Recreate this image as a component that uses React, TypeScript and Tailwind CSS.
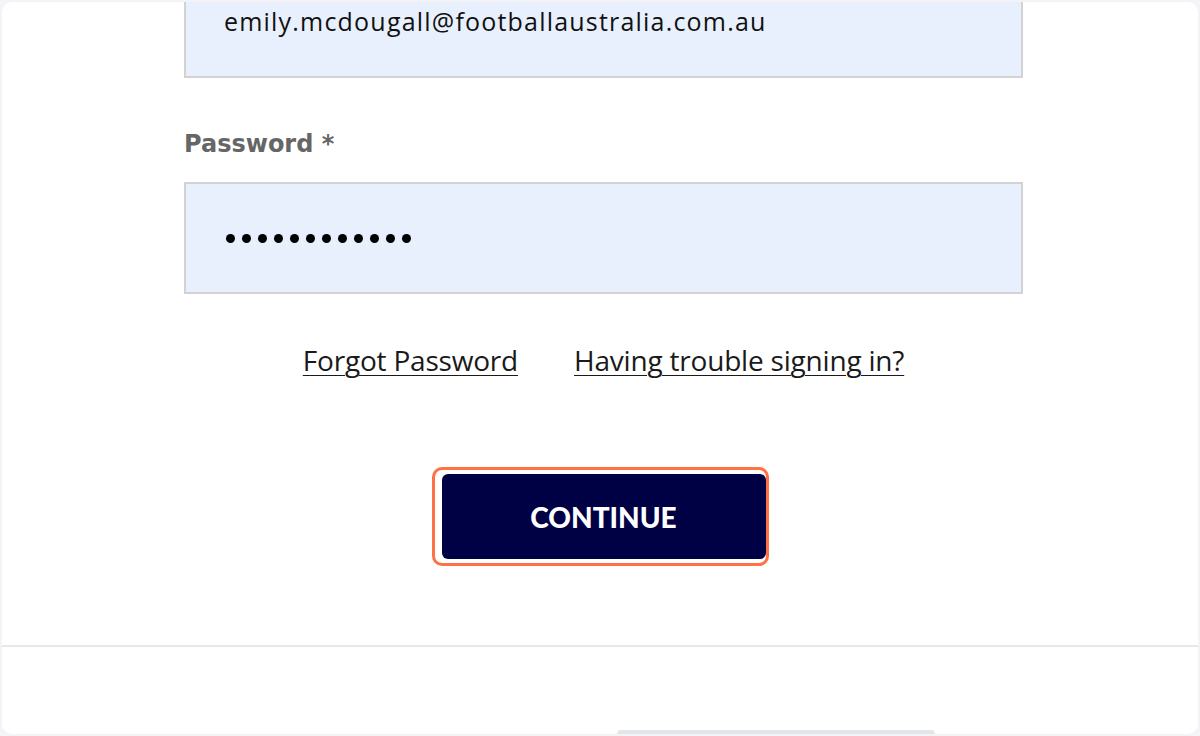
export default function App() {
  return (
    <div className="w-[1200px] h-[736px] overflow-hidden bg-[#f3f3f8] p-[2px]">
      <div className="relative flex h-full flex-col overflow-hidden rounded-[10px] bg-white">
        <div className="h-[643px] pl-[182px]">
          <div className="w-[839px]">
            <div
              className="mt-[-37px] flex h-[113px] items-center border-2 border-[#d2d2d2] bg-[#e8f0fe] pl-[38px] text-[25px] tracking-[1.2px] text-[#111]"
              style={{ fontFamily: '"Open Sans", sans-serif' }}
            >
              emily.mcdougall@footballaustralia.com.au
            </div>

            <label
              className="mt-[51px] block text-[24px] leading-[30px] font-bold text-[#666]"
              style={{ fontFamily: '"DejaVu Sans", sans-serif' }}
            >
              Password *
            </label>

            <div className="mt-[23px] flex h-[112px] items-center border-2 border-[#d2d2d2] bg-[#e8f0fe] pl-[40px]">
              <div className="flex gap-[7px]">
                {Array.from({ length: 12 }).map((_, i) => (
                  <span key={i} className="h-[9px] w-[9px] rounded-full bg-black" />
                ))}
              </div>
            </div>

            <div
              className="mt-[51px] flex justify-center gap-[56px] text-[28px] leading-[30px] tracking-[-0.2px] text-[#1a1a1a]"
              style={{ fontFamily: '"Open Sans", sans-serif' }}
            >
              <a href="#" className="underline underline-offset-[4px] decoration-1">Forgot Password</a>
              <a href="#" className="underline underline-offset-[4px] decoration-1">Having trouble signing in?</a>
            </div>

            <div className="mt-[92px] flex justify-center pr-[7px]">
              <div className="rounded-[10px] border-[3px] border-[#ff7143] py-[4px] pr-[0px] pl-[7px]">
                <button
                  className="flex h-[85px] w-[324px] items-center justify-center rounded-[6px] bg-[#000045] text-[28px] font-black text-white"
                  style={{ fontFamily: 'Lato, sans-serif' }}
                >
                  CONTINUE
                </button>
              </div>
            </div>
          </div>
        </div>

        <div className="border-t-2 border-[#e4e9ec]" />
        <div className="flex-1" />
        <div className="absolute bottom-0 left-[615px] h-[4px] w-[318px] rounded-t-[4px] bg-[#e2e5e7]" />
      </div>
    </div>
  );
}
